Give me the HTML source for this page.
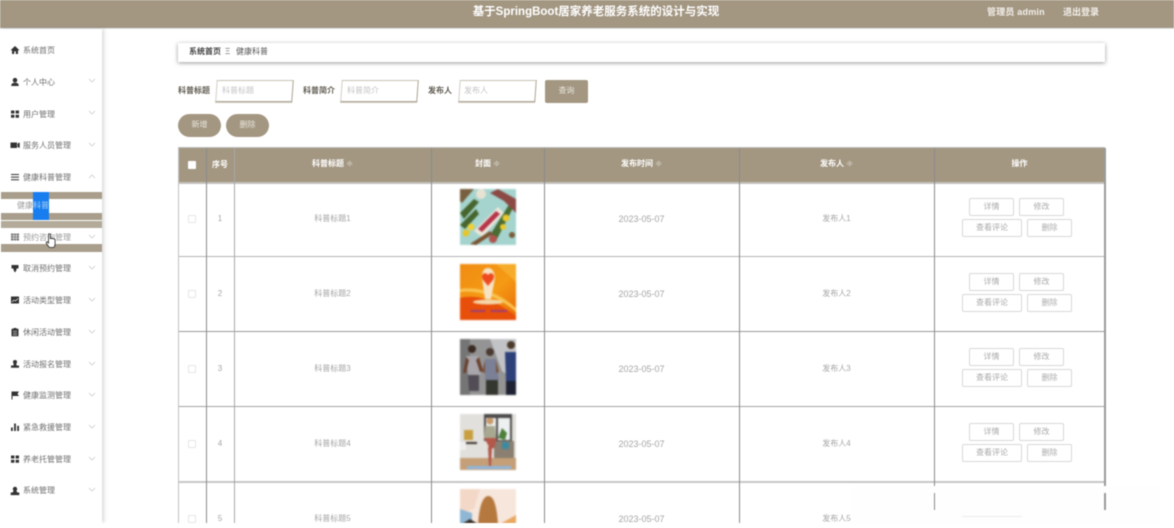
<!DOCTYPE html>
<html lang="zh-CN"><head><meta charset="utf-8"><title>基于SpringBoot居家养老服务系统的设计与实现</title>
<style>
html,body{margin:0;padding:0;width:1174px;height:528px;overflow:hidden;background:#fff}
#p{position:relative;width:1174px;height:528px;overflow:hidden;background:#fff;font-family:"Liberation Sans","Noto Sans CJK SC",sans-serif;font-size:8px;filter:blur(.5px)}
#p div,#p svg{position:absolute}
.t{white-space:nowrap;line-height:12px;height:12px;text-align:center}
.m{left:23px;color:#6e6e6e;text-align:left}
.i{left:10px;width:10px;height:10px}
.c{left:88px;width:8px;height:5px}
.h{color:#fff;font-weight:bold;top:158px}
.g{color:#a5a5a5}
.d{font-size:9px}
.hl{left:178px;width:927px;height:1px;background:#a2a2a2}
.vl{top:148px;height:375px;width:1px;background:#8b8b8b}
.b{box-sizing:border-box;height:18px;border:1px solid #d8d8d8;border-radius:2px;color:#aaa;line-height:16px;text-align:center;background:#fff}
.k{left:188px;width:8px;height:8px;box-sizing:border-box;border:1px solid #e6e6e6;border-radius:1px;background:#fff}
.s{box-sizing:border-box;top:80px;height:22px;border:1px solid #b0a795;border-top-color:#c9c3b6;border-left-color:#d5d1c8;background:#fff;transform:skewX(-4deg);box-shadow:0 1px 0 #cfc9bd}
.ph{top:85px;color:#c4c4c4;text-align:left}
.l{top:85px;color:#5f5a50;font-weight:bold;text-align:left}
.pill{top:114px;height:23px;border-radius:12px;background:#a39782;color:#e9e5dc;line-height:22px;text-align:center}
.im{left:460px;width:56px;overflow:hidden;filter:blur(.7px)}
</style></head><body>
<div id="p">
<!-- header -->
<div style="left:0;top:0;width:1174px;height:28px;background:#a39782;box-shadow:0 1px 0 #dfe4ea"></div>
<div class="t" style="left:446px;width:300px;top:5px;height:14px;line-height:14px;font-size:11.5px;font-weight:bold;color:#fff">基于SpringBoot居家养老服务系统的设计与实现</div>
<div class="t" style="left:987px;top:6px;color:#f2efe9;font-weight:bold;font-size:9px;letter-spacing:.2px">管理员 admin</div>
<div class="t" style="left:1063px;top:6px;color:#f2efe9;font-weight:bold;font-size:9px">退出登录</div>

<!-- sidebar -->
<div style="left:0;top:29px;width:102px;height:494px;background:#fff;box-shadow:2px 0 4px rgba(120,120,120,.28)"></div>
<div style="left:1px;top:192px;width:101px;height:7px;background:#a89e8b"></div>
<div style="left:1px;top:213px;width:101px;height:7px;background:#a89e8b"></div>
<div style="left:1px;top:221px;width:101px;height:7px;background:#b3aa99"></div>
<div style="left:1px;top:244px;width:101px;height:8px;background:#a89e8b"></div>
<div style="left:33px;top:192px;width:16px;height:28px;background:#187ef0"></div>

<svg class="i" style="top:45px" viewBox="0 0 10 10"><path d="M5 1L.5 5.2H2V9h2.2V6.4h1.6V9H8V5.2h1.5z" fill="#333"/></svg>
<div class="t m" style="top:45px">系统首页</div>

<svg class="i" style="top:77px" viewBox="0 0 10 10"><circle cx="5" cy="3.2" r="2.3" fill="#333"/><path d="M1.2 9c0-2.6 1.6-3.3 3.800-3.300S8.800 6.400 8.800 9z" fill="#333"/></svg>
<div class="t m" style="top:77px">个人中心</div>
<svg class="c" style="top:78px" viewBox="0 0 8 5"><path d="M1 1l3 3 3-3" fill="none" stroke="#c4c4c4" stroke-width=".7"/></svg>

<svg class="i" style="top:109px" viewBox="0 0 10 10"><path d="M1 1.500h3.400v3H1zM5.600 1.500H9v3H5.600zM1 5.800h3.400v3H1zM5.600 5.800H9v3H5.600z" fill="#333"/></svg>
<div class="t m" style="top:109px">用户管理</div>
<svg class="c" style="top:110px" viewBox="0 0 8 5"><path d="M1 1l3 3 3-3" fill="none" stroke="#c4c4c4" stroke-width=".7"/></svg>

<svg class="i" style="top:140px" viewBox="0 0 10 10"><path d="M.5 2.500h6.500v5.500H.5zM7.500 3.500L9.700 2.500V8L7.500 7z" fill="#333"/></svg>
<div class="t m" style="top:140px">服务人员管理</div>
<svg class="c" style="top:142px" viewBox="0 0 8 5"><path d="M1 1l3 3 3-3" fill="none" stroke="#c4c4c4" stroke-width=".7"/></svg>

<svg class="i" style="top:172px" viewBox="0 0 10 10"><path d="M1 2h8v1H1zM1 4.600h8v1H1zM1 7.200h8v1H1z" fill="#333"/></svg>
<div class="t m" style="top:172px">健康科普管理</div>
<svg class="c" style="top:174px" viewBox="0 0 8 5"><path d="M1 4l3-3 3 3" fill="none" stroke="#c4c4c4" stroke-width=".7"/></svg>

<div class="t" style="left:17px;top:200px;color:#9a9a9a">健康<span style="color:#a9d0f5">科普</span></div>

<svg class="i" style="top:232px" viewBox="0 0 10 10"><path d="M1 1.500h8v7H1z" fill="#777"/><path d="M1 3.800h8M1 6.200h8M3.700 1.500v7M6.300 1.500v7" stroke="#fff" stroke-width=".5"/></svg>
<div class="t m" style="top:232px;color:#999">预约咨询管理</div>
<svg class="c" style="top:234px" viewBox="0 0 8 5"><path d="M1 1l3 3 3-3" fill="none" stroke="#c4c4c4" stroke-width=".7"/></svg>

<svg class="i" style="top:263px" viewBox="0 0 10 10"><path d="M1.500 2h7v3.500h-7zM3.500 5.500h3v2h-3zM4.200 7.500h1.600v1.500H4.200z" fill="#333"/></svg>
<div class="t m" style="top:263px">取消预约管理</div>
<svg class="c" style="top:265px" viewBox="0 0 8 5"><path d="M1 1l3 3 3-3" fill="none" stroke="#c4c4c4" stroke-width=".7"/></svg>

<svg class="i" style="top:295px" viewBox="0 0 10 10"><path d="M1 1.500h8v7H1z" fill="#333"/><path d="M2 7l2-2 1.500 1L8 3.500" fill="none" stroke="#fff" stroke-width=".6"/></svg>
<div class="t m" style="top:295px">活动类型管理</div>
<svg class="c" style="top:297px" viewBox="0 0 8 5"><path d="M1 1l3 3 3-3" fill="none" stroke="#c4c4c4" stroke-width=".7"/></svg>

<svg class="i" style="top:327px" viewBox="0 0 10 10"><path d="M1.500 1.800h2V1h3v.8h2V9.300h-7z" fill="#333"/><path d="M3 4.200h4M3 6h4M3 7.700h4" stroke="#fff" stroke-width=".5"/></svg>
<div class="t m" style="top:327px">休闲活动管理</div>
<svg class="c" style="top:329px" viewBox="0 0 8 5"><path d="M1 1l3 3 3-3" fill="none" stroke="#c4c4c4" stroke-width=".7"/></svg>

<svg class="i" style="top:359px" viewBox="0 0 10 10"><circle cx="5" cy="3" r="2" fill="#333"/><path d="M3.800 4.500h2.400l.4 2H9v2.300H1V6.500h2.400z" fill="#333"/></svg>
<div class="t m" style="top:359px">活动报名管理</div>
<svg class="c" style="top:361px" viewBox="0 0 8 5"><path d="M1 1l3 3 3-3" fill="none" stroke="#c4c4c4" stroke-width=".7"/></svg>

<svg class="i" style="top:390px" viewBox="0 0 10 10"><path d="M1.500 1.500h7.500L7.500 3.800 9 6H2.500v3.500h-1z" fill="#333"/></svg>
<div class="t m" style="top:390px">健康监测管理</div>
<svg class="c" style="top:392px" viewBox="0 0 8 5"><path d="M1 1l3 3 3-3" fill="none" stroke="#c4c4c4" stroke-width=".7"/></svg>

<svg class="i" style="top:422px" viewBox="0 0 10 10"><path d="M1 5.500h1.800V9H1zM4.100 1.500h1.800V9H4.100zM7.200 3.800H9V9H7.200z" fill="#333"/></svg>
<div class="t m" style="top:422px">紧急救援管理</div>
<svg class="c" style="top:424px" viewBox="0 0 8 5"><path d="M1 1l3 3 3-3" fill="none" stroke="#c4c4c4" stroke-width=".7"/></svg>

<svg class="i" style="top:454px" viewBox="0 0 10 10"><path d="M1 1.500h3.400v3H1zM5.600 1.500H9v3H5.600zM1 5.800h3.400v3H1zM5.600 5.800H9v3H5.600z" fill="#333"/></svg>
<div class="t m" style="top:454px">养老托管管理</div>
<svg class="c" style="top:456px" viewBox="0 0 8 5"><path d="M1 1l3 3 3-3" fill="none" stroke="#c4c4c4" stroke-width=".7"/></svg>

<svg class="i" style="top:486px" viewBox="0 0 10 10"><circle cx="5" cy="3" r="2.200" fill="#333"/><path d="M3.500 4.800h3l.8 1.700H9.300v2.600H.7V6.500h2z" fill="#333"/></svg>
<div class="t m" style="top:485px">系统管理</div>
<svg class="c" style="top:487px" viewBox="0 0 8 5"><path d="M1 1l3 3 3-3" fill="none" stroke="#c4c4c4" stroke-width=".7"/></svg>

<!-- breadcrumb -->
<div style="left:178px;top:43px;width:927px;height:19px;background:#fff;box-shadow:0 1px 4px rgba(70,70,70,.55)"></div>
<div class="t" style="left:189px;top:46px;color:#444;font-weight:bold">系统首页</div>
<div class="t" style="left:225px;top:46px;color:#666">Ξ</div>
<div class="t" style="left:236px;top:46px;color:#555">健康科普</div>

<!-- search -->
<div class="t l" style="left:178px">科普标题</div>
<div class="s" style="left:216px;width:77px"></div>
<div class="t ph" style="left:222px">科普标题</div>
<div class="t l" style="left:303px">科普简介</div>
<div class="s" style="left:341px;width:77px"></div>
<div class="t ph" style="left:347px">科普简介</div>
<div class="t l" style="left:428px">发布人</div>
<div class="s" style="left:459px;width:77px"></div>
<div class="t ph" style="left:464px">发布人</div>
<div style="left:545px;top:80px;width:43px;height:23px;border-radius:2px;background:#a39782;color:#e9e5dc;line-height:22px;text-align:center">查询</div>
<div class="pill" style="left:178px;width:43px">新增</div>
<div class="pill" style="left:226px;width:43px">删除</div>

<!-- table -->
<div style="left:178px;top:148px;width:927px;height:34px;background:#a39782"></div>
<div style="left:178px;top:147px;width:927px;height:1px;background:#bdbdbd"></div>
<div class="hl" style="top:182px;height:2px;background:#c4c2bd"></div>
<div class="hl" style="top:256px;background:#b4b4b4"></div>
<div class="hl" style="top:331px;background:#9a9a9a"></div>
<div class="hl" style="top:406px;background:#a4a4a4"></div>
<div class="hl" style="top:481px;height:2px;background:#c6c6c6"></div>
<div class="vl" style="left:178px;background:#c2c2c2"></div>
<div class="vl" style="left:206px"></div>
<div class="vl" style="left:234px;background:#a8a8a8"></div>
<div class="vl" style="left:431px;height:375px"></div>
<div class="vl" style="left:544px;height:375px"></div>
<div class="vl" style="left:739px;height:375px"></div>
<div class="vl" style="left:934px"></div>
<div class="vl" style="left:1104px;width:2px;background:#9a9a9a"></div>

<!-- head -->
<div style="left:188px;top:161px;width:8px;height:8px;background:#fff;border-radius:1px"></div>
<div class="t h" style="left:206px;width:28px;top:159px">序号</div>
<div class="t h" style="left:234px;width:197px">科普标题 <span style="color:#cfc9bc">≑</span></div>
<div class="t h" style="left:431px;width:113px">封面 <span style="color:#cfc9bc">≑</span></div>
<div class="t h" style="left:544px;width:195px">发布时间 <span style="color:#cfc9bc">≑</span></div>
<div class="t h" style="left:739px;width:195px">发布人 <span style="color:#cfc9bc">≑</span></div>
<div class="t h" style="left:934px;width:171px">操作</div>

<!-- row 1 -->
<div class="k" style="top:215px"></div>
<div class="t g" style="left:206px;width:28px;top:213px">1</div>
<div class="t g" style="left:234px;width:197px;top:213px">科普标题1</div>
<svg class="im" style="top:189px;height:56px" viewBox="0 0 56 56"><rect width="56" height="56" fill="#a5d4cf"/><path d="M0 24L14 10l5 3L4 30zM0 36L16 20l3 5L5 40z" fill="#47662f"/><path d="M30 46L50 14l4 3L37 50z" fill="#4a6b32"/><path d="M38 0L56 10v14L44 12 30 4z" fill="#8c4a45"/><path d="M14 42L38 18l6 6-22 24z" fill="#ece6d8"/><path d="M18 40L36 22l4 3-18 18z" fill="#b5364a"/><circle cx="6" cy="44" r="3.500" fill="#e6c62a"/><circle cx="11" cy="38" r="3.500" fill="#ecd238"/><circle cx="46" cy="29" r="3.500" fill="#e9c92d"/><circle cx="43" cy="38" r="3" fill="#e9c92d"/><circle cx="21" cy="5" r="5" fill="#e8e2d2"/><path d="M10 55l20-13 3 3-17 11z" fill="#7b5433"/><circle cx="33" cy="50" r="4" fill="#b0544f"/><path d="M0 0h14L2 14 0 12z" fill="#78603f"/><circle cx="52" cy="46" r="3" fill="#7b5a3a"/></svg>
<div class="t g d" style="left:544px;width:195px;top:213px">2023-05-07</div>
<div class="t g" style="left:739px;width:195px;top:213px">发布人1</div>
<div class="b" style="left:969px;top:198px;width:45px">详情</div><div class="b" style="left:1019px;top:198px;width:45px">修改</div>
<div class="b" style="left:962px;top:219px;width:60px">查看评论</div><div class="b" style="left:1027px;top:219px;width:45px">删除</div>

<!-- row 2 -->
<div class="k" style="top:290px"></div>
<div class="t g" style="left:206px;width:28px;top:288px">2</div>
<div class="t g" style="left:234px;width:197px;top:288px">科普标题2</div>
<svg class="im" style="top:264px;height:56px" viewBox="0 0 56 56"><defs><linearGradient id="o" x1="0" y1="0" x2="1" y2="1"><stop offset="0" stop-color="#f08c12"/><stop offset=".55" stop-color="#f59a14"/><stop offset="1" stop-color="#e86a08"/></linearGradient></defs><rect width="56" height="56" fill="url(#o)"/><path d="M0 34Q25 28 56 52V56H0z" fill="#e84f0a"/><path d="M0 28Q30 25 56 48V44Q30 21 0 25z" fill="#f9c24e"/><path d="M36 0h20v18z" fill="#f6ac2a"/><path d="M22 14Q22 4 28 4T35 14L31 35H25z" fill="#f7e3c4"/><path d="M28 11c-2-3-6-2-6 2 0 3 4 6 6 9 2-3 6-6 6-9 0-4-4-5-6-2z" fill="#ee4a1e"/><ellipse cx="28" cy="38" rx="15" ry="2.500" fill="#f4d6a8"/><path d="M11 47h14M31 47h16" stroke="#7a35a8" stroke-width="2" stroke-dasharray="2 1"/></svg>
<div class="t g d" style="left:544px;width:195px;top:288px">2023-05-07</div>
<div class="t g" style="left:739px;width:195px;top:288px">发布人2</div>
<div class="b" style="left:969px;top:273px;width:45px">详情</div><div class="b" style="left:1019px;top:273px;width:45px">修改</div>
<div class="b" style="left:962px;top:294px;width:60px">查看评论</div><div class="b" style="left:1027px;top:294px;width:45px">删除</div>

<!-- row 3 -->
<div class="k" style="top:365px"></div>
<div class="t g" style="left:206px;width:28px;top:363px">3</div>
<div class="t g" style="left:234px;width:197px;top:363px">科普标题3</div>
<svg class="im" style="top:339px;height:56px" viewBox="0 0 56 56"><rect width="56" height="56" fill="#949494"/><path d="M30 0h26v42L42 32z" fill="#c2c3c6"/><rect width="10" height="56" fill="#757575"/><circle cx="12" cy="10" r="4" fill="#3a2a22"/><path d="M6 17h13l2 19H8z" fill="#a8a6ab"/><path d="M8 36h11v16H9z" fill="#514c55"/><path d="M6 18L3 34h3L9 21zM19 18l4 14-3 1-4-12z" fill="#6b4230"/><circle cx="30" cy="13" r="4" fill="#4a3a32"/><path d="M25 20h11l3 21H25z" fill="#7b8096"/><path d="M26 41h12v15H26z" fill="#34372f"/><path d="M25 21l-3 12 3 1zM36 21l3 12-3 1z" fill="#7a5238"/><circle cx="51" cy="6" r="4" fill="#4d3a2a"/><path d="M45 13h11v29H46z" fill="#2d4078"/><path d="M46 42h10v14H46z" fill="#1e2233"/></svg>
<div class="t g d" style="left:544px;width:195px;top:363px">2023-05-07</div>
<div class="t g" style="left:739px;width:195px;top:363px">发布人3</div>
<div class="b" style="left:969px;top:348px;width:45px">详情</div><div class="b" style="left:1019px;top:348px;width:45px">修改</div>
<div class="b" style="left:962px;top:369px;width:60px">查看评论</div><div class="b" style="left:1027px;top:369px;width:45px">删除</div>

<!-- row 4 -->
<div class="k" style="top:440px"></div>
<div class="t g" style="left:206px;width:28px;top:438px">4</div>
<div class="t g" style="left:234px;width:197px;top:438px">科普标题4</div>
<svg class="im" style="top:414px;height:56px" viewBox="0 0 56 56"><rect width="56" height="56" fill="#e2e0dc"/><rect x="24" width="28" height="27" fill="#4c4a4a"/><rect x="26" y="4" width="10" height="22" fill="#eef1f1"/><rect x="38" y="4" width="12" height="22" fill="#eef1f1"/><rect y="44" width="56" height="12" fill="#c49f78"/><rect x="34" y="27" width="20" height="17" fill="#8a7f70"/><rect x="42" y="28" width="7" height="7" fill="#3d8aa0"/><path d="M38 24l4-10 5 5-2 7z" fill="#4d7f3a"/><rect x="4" y="16" width="9" height="10" fill="#c8a040"/><rect y="28" width="17" height="2" fill="#3a3028"/><rect y="28" width="6" height="8" fill="#eee"/><circle cx="30" cy="7" r="3.500" fill="#c99a6a"/><path d="M25 12h10l1 12H24z" fill="#a8a890"/><path d="M24 24h13l-3 10-4 1-3-6z" fill="#b3584a"/><path d="M28 33h4l-1 20h-2z" fill="#b3584a"/><rect x="7" y="52" width="44" height="3" fill="#8fb6dc"/></svg>
<div class="t g d" style="left:544px;width:195px;top:438px">2023-05-07</div>
<div class="t g" style="left:739px;width:195px;top:438px">发布人4</div>
<div class="b" style="left:969px;top:423px;width:45px">详情</div><div class="b" style="left:1019px;top:423px;width:45px">修改</div>
<div class="b" style="left:962px;top:444px;width:60px">查看评论</div><div class="b" style="left:1027px;top:444px;width:45px">删除</div>

<!-- row 5 -->
<div class="k" style="top:515px"></div>
<div class="t g" style="left:206px;width:28px;top:513px">5</div>
<div class="t g" style="left:234px;width:197px;top:513px">科普标题5</div>
<svg class="im" style="top:489px;height:35px" viewBox="0 0 56 35"><rect width="56" height="35" fill="#f7e6dc"/><path d="M0 0h20L14 20 0 24z" fill="#f3d8c8"/><path d="M0 20l12 4v11H0z" fill="#8fb6d4"/><path d="M18 35Q20 8 28 7T38 35z" fill="#b5793f"/><path d="M40 35L56 26V35z" fill="#e8a860"/><path d="M2 35l8-5 8 5z" fill="#3a3226"/></svg>
<div class="t g d" style="left:544px;width:195px;top:513px">2023-05-07</div>
<div class="t g" style="left:739px;width:195px;top:513px">发布人5</div>

<!-- bottom-right white patch -->
<div style="left:851px;top:486px;width:309px;height:42px;background:#fefefe"></div>
<div style="left:934px;top:493px;width:1px;height:17px;background:#8b8b8b"></div>
<div style="left:1104px;top:493px;width:2px;height:17px;background:#9a9a9a"></div>
<div style="left:962px;top:516px;width:60px;height:1px;background:#ececec"></div>
<!-- bottom white strip -->
<div style="left:0;top:523px;width:1174px;height:5px;background:#fff"></div>

<!-- hand cursor -->
<svg style="left:45px;top:233px;width:13px;height:16px" viewBox="0 0 13 16"><path d="M3.500 1.500c0-1 1.800-1 1.800 0V6c0-.9 1.700-.9 1.700 0 0-.7 1.600-.7 1.600.2 0-.6 1.500-.5 1.500.4v4.400c0 1.800-1 3.500-1.800 3.500H5C4 14.500 3 13 1.500 10.500.8 9.300 1.500 8.300 2.500 9l1 1z" fill="#fff" stroke="#222" stroke-width=".8"/></svg>
</div>
</body></html>
